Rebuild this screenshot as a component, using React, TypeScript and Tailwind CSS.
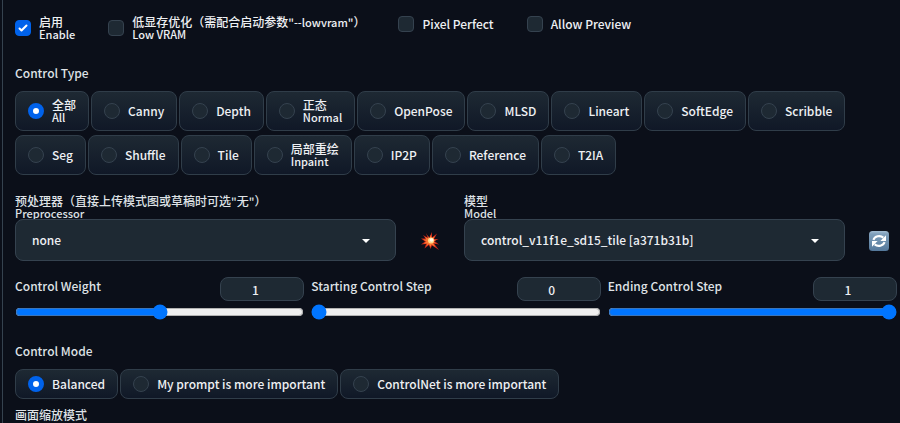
import { useState } from "react";

type Option = { en: string; zh?: string };

const controlTypes: Option[] = [
  { en: "All", zh: "全部" },
  { en: "Canny" },
  { en: "Depth" },
  { en: "Normal", zh: "正态" },
  { en: "OpenPose" },
  { en: "MLSD" },
  { en: "Lineart" },
  { en: "SoftEdge" },
  { en: "Scribble" },
  { en: "Seg" },
  { en: "Shuffle" },
  { en: "Tile" },
  { en: "Inpaint", zh: "局部重绘" },
  { en: "IP2P" },
  { en: "Reference" },
  { en: "T2IA" },
];

const controlModes: Option[] = [
  { en: "Balanced" },
  { en: "My prompt is more important" },
  { en: "ControlNet is more important" },
];

// Latin runs inside a Chinese caption are set one step smaller than the Chinese.
function Mixed({ text }: { text: string }) {
  return (
    <span>
      {text.split(/([\x20-\x7e]+)/).map((part, i) =>
        i % 2 ? (
          <span key={i} className="text-[11px]">
            {part}
          </span>
        ) : (
          part
        ),
      )}
    </span>
  );
}

function Caption({ en, zh }: Option) {
  if (!zh) return <span className="leading-4 whitespace-nowrap">{en}</span>;
  return (
    <span className="flex flex-col text-xs leading-3 whitespace-nowrap">
      <Mixed text={zh} />
      <span className="text-[11px] leading-3">{en}</span>
    </span>
  );
}

function Check({ en, zh, initial = false }: Option & { initial?: boolean }) {
  const [on, setOn] = useState(initial);
  return (
    <label className="flex items-center gap-2">
      <span className="grid size-4 shrink-0">
        <input
          type="checkbox"
          checked={on}
          onChange={() => setOn(!on)}
          className="col-start-1 row-start-1 size-4 appearance-none rounded border border-[#35424f] bg-[#1e2933] checked:border-[#0062eb] checked:bg-[#0062eb]"
        />
        {on && (
          <svg viewBox="0 0 16 16" fill="white" className="pointer-events-none col-start-1 row-start-1 size-4">
            <path d="M12.207 4.793a1 1 0 010 1.414l-5 5a1 1 0 01-1.414 0l-2-2a1 1 0 011.414-1.414L6.5 9.086l4.293-4.293a1 1 0 011.414 0z" />
          </svg>
        )}
      </span>
      <Caption en={en} zh={zh} />
    </label>
  );
}

function RadioGroup({ legend, name, options, tall = false }: { legend: string; name: string; options: Option[]; tall?: boolean }) {
  const [value, setValue] = useState(options[0].en);
  return (
    <fieldset>
      <legend className="mb-2 leading-5 text-[#dfe2e6]">{legend}</legend>
      <div className="flex flex-wrap gap-x-[2px] gap-y-1">
        {options.map((o) => (
          <label
            key={o.en}
            className={`flex items-center gap-2 rounded-lg border border-[#303d49] bg-linear-to-b from-[#1e2933] to-[#101827] px-3 ${tall ? "h-10" : "h-[30px]"}`}
          >
            <input
              type="radio"
              name={name}
              checked={value === o.en}
              onChange={() => setValue(o.en)}
              className="size-4 shrink-0 appearance-none rounded-full border border-[#35424f] bg-[#1e2933] checked:border-[5px] checked:border-[#0062eb] checked:bg-white"
            />
            <Caption en={o.en} zh={o.zh} />
          </label>
        ))}
      </div>
    </fieldset>
  );
}

function Dropdown({ id, zh, en, value }: { id: string; zh: string; en: string; value: string }) {
  return (
    <div className="min-w-0 flex-1">
      <label htmlFor={id} className="block text-[#dfe2e6]">
        <Caption zh={zh} en={en} />
      </label>
      <div className="grid items-center">
        <select
          id={id}
          className="col-start-1 row-start-1 h-[42px] w-full appearance-none rounded-lg border border-[#35424f] bg-[#1e2933] px-4 text-[#eef0f3]"
        >
          <option>{value}</option>
        </select>
        <svg
          viewBox="0 0 18 18"
          fill="white"
          className="pointer-events-none col-start-1 row-start-1 mr-[21px] size-[18px] justify-self-end"
        >
          <path d="M5 8l4 4 4-4z" />
        </svg>
      </div>
    </div>
  );
}

function BurstIcon() {
  return (
    <svg viewBox="0 0 20 20" className="size-5">
      <path
        fill="#c8281a"
        d="M6 2L9 7L12 1L12 6.500L17 2.500L14 8L18.500 8L14.500 10L19 13.500L14 12.500L19 19L12 14.500L10.500 18L9 14L4.500 17.500L6 13L1 13.500L5 10.500L1 7.500L5.500 7.500L3 4L7.500 6.500Z"
      />
      <path
        fill="#ff7a32"
        d="M7.500 4L9.500 7.500L11 3.500L11.500 7.500L15 5L13 8.500L16 9L13.500 10.500L16 12.500L13 12L15.500 16L11.500 13.500L10.500 16L9 13L6 15.500L7.500 12.500L3.500 12.500L6.500 10.500L3 8.500L6.500 8.500L5 6L8.500 7.500Z"
      />
      <circle cx="11" cy="9.500" r="3" fill="#ffd98a" />
      <circle cx="11.500" cy="9" r="1.800" fill="#fffbe8" />
    </svg>
  );
}

function RefreshIcon() {
  return (
    <svg viewBox="0 0 20 20" className="size-5">
      <defs>
        <linearGradient id="tile" x1="0" y1="0" x2="0" y2="1">
          <stop offset="0" stopColor="#a3bdd3" />
          <stop offset="0.150" stopColor="#7f9fbb" />
          <stop offset="1" stopColor="#54789b" />
        </linearGradient>
      </defs>
      <rect width="20" height="20" rx="3.500" fill="url(#tile)" />
      <path d="M4.400 8.800A6 5.200 0 0 1 14.300 6.600M15.600 11.200A6 5.200 0 0 1 5.700 13.400" fill="none" stroke="white" strokeWidth="2.100" />
      <path d="M17 4.300V10H11.400ZM3 15.700V10H8.600Z" fill="white" />
    </svg>
  );
}

function Slider({ id, label, max, initial }: { id: string; label: string; max: number; initial: number }) {
  const [value, setValue] = useState(initial);
  return (
    <div className="min-w-0 flex-1">
      <div className="flex items-start justify-between">
        <label htmlFor={id} className="leading-[18px] whitespace-nowrap text-[#dfe2e6]">
          {label}
        </label>
        <input
          type="number"
          aria-label={`${label} value`}
          value={value}
          min={0}
          max={max}
          onChange={(e) => setValue(Number(e.target.value))}
          className="h-6 w-[84px] rounded-lg border border-[#35424f] bg-[#1e2933] pr-[14px] text-center text-[#eef0f3] [appearance:textfield] [&::-webkit-inner-spin-button]:appearance-none"
        />
      </div>
      <input
        id={id}
        type="range"
        min={0}
        max={max}
        step={0.05}
        value={value}
        onChange={(e) => setValue(Number(e.target.value))}
        className="mt-[3px] block h-4 w-full accent-[#0075ff]"
      />
    </div>
  );
}

export default function App() {
  return (
    <main className="h-screen overflow-hidden bg-[#0b0f19] pl-[2px] font-['Noto_Sans_CJK_SC',sans-serif] text-xs font-medium text-[#eef0f3]">
      <div className="min-h-full border-l border-[#35424f] pr-[3px] pl-3">
        <div className="flex items-start gap-[33px] pt-4">
          <Check zh="启用" en="Enable" initial />
          <Check zh={'低显存优化（需配合启动参数"--lowvram"）'} en="Low VRAM" />
          <Check en="Pixel Perfect" />
          <Check en="Allow Preview" />
        </div>
        <div className="mt-[23px]">
          <RadioGroup legend="Control Type" name="type" options={controlTypes} tall />
        </div>
        <div className="mt-5 flex gap-4">
          <div className="flex flex-1 items-end gap-4">
            <Dropdown id="preprocessor" zh={'预处理器（直接上传模式图或草稿时可选"无"）'} en="Preprocessor" value="none" />
            <button aria-label="Run preprocessor" className="flex h-10 w-9 items-center justify-center">
              <BurstIcon />
            </button>
          </div>
          <div className="flex flex-1 items-end gap-4">
            <Dropdown id="model" zh="模型" en="Model" value="control_v11f1e_sd15_tile [a371b31b]" />
            <button aria-label="Refresh models" className="flex h-10 w-9 items-center justify-center">
              <RefreshIcon />
            </button>
          </div>
        </div>
        <div className="mt-4 flex gap-[7px]">
          <Slider id="weight" label="Control Weight" max={2} initial={1} />
          <Slider id="start" label="Starting Control Step" max={1} initial={0} />
          <Slider id="end" label="Ending Control Step" max={1} initial={1} />
        </div>
        <div className="mt-[21px]">
          <RadioGroup legend="Control Mode" name="mode" options={controlModes} />
        </div>
        <p className="mt-2 text-xs leading-4 text-[#dfe2e6]">画面缩放模式</p>
      </div>
    </main>
  );
}
